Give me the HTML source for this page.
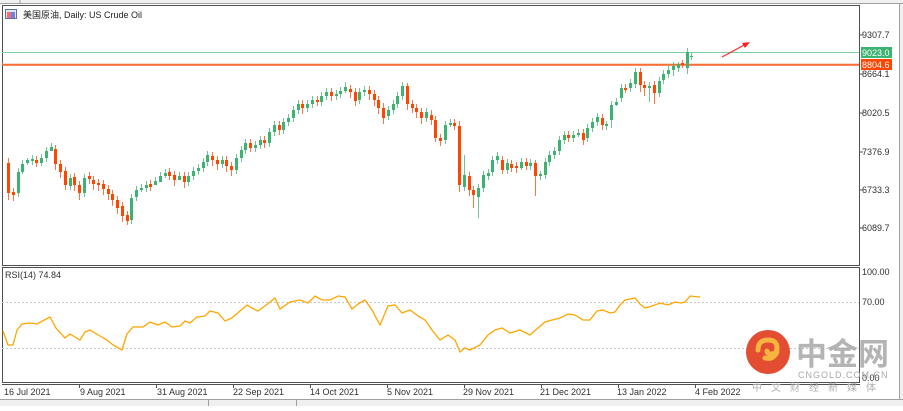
<!DOCTYPE html>
<html><head><meta charset="utf-8"><style>
body{margin:0;width:903px;height:406px;overflow:hidden;background:#fff;font-family:"Liberation Sans","Noto Sans CJK SC",sans-serif}
svg text{font-family:"Liberation Sans","Noto Sans CJK SC",sans-serif}
</style></head><body>
<svg width="903" height="406" xmlns="http://www.w3.org/2000/svg">
<rect x="0" y="0" width="903" height="406" fill="#fff"/>
<rect x="0" y="0" width="903" height="3" fill="#f0f0f0"/>
<line x1="0" y1="3.5" x2="903" y2="3.5" stroke="#a0a0a0"/>
<line x1="20" y1="0" x2="20" y2="3" stroke="#a0a0a0"/>
<rect x="0" y="399" width="903" height="7" fill="#f0f0f0"/>
<line x1="0" y1="399.5" x2="903" y2="399.5" stroke="#a0a0a0"/>
<line x1="208.5" y1="400" x2="208.5" y2="406" stroke="#a0a0a0"/>
<line x1="296.5" y1="400" x2="296.5" y2="406" stroke="#a0a0a0"/>
<rect x="899" y="4" width="4" height="395" fill="#f0f0f0"/>
<line x1="899.5" y1="4" x2="899.5" y2="399" stroke="#a0a0a0"/>
<rect x="2.5" y="5.5" width="857" height="260" fill="none" stroke="#505050"/>
<rect x="2.5" y="267.5" width="857" height="115" fill="none" stroke="#505050"/>
<line x1="2" y1="384.5" x2="860" y2="384.5" stroke="#505050"/>
<line x1="2" y1="302.5" x2="859" y2="302.5" stroke="#c8c8c8" stroke-dasharray="2,2"/>
<line x1="2" y1="348.5" x2="859" y2="348.5" stroke="#c8c8c8" stroke-dasharray="2,2"/>
<line x1="2" y1="52.5" x2="859" y2="52.5" stroke="#7fd0a0"/>
<line x1="2" y1="64" x2="859" y2="64" stroke="#f8b090"/>
<line x1="2" y1="65" x2="859" y2="65" stroke="#ff4500" stroke-width="1.3"/>

<!-- wicks -->
<path stroke-width="1" fill="none" stroke="#ff4500" opacity="0.75" d="
M8.5 158V200 M13.5 188V201 M36.5 156V167 M55.5 145V170 M60.5 160V178 M65.5 167V190 M74.5 173V191 M79.5 181V200 M89.5 172V184 M93.5 176V190 M98.5 179V191 M103.5 180V195 M108.5 185V200 M112.5 190V206 M117.5 196V214 M122.5 202V222 M127.5 211V225
M150.5 180V191 M169.5 168V180 M174.5 171V186 M184.5 172V188 M212.5 152V166 M217.5 156V170 M226.5 156V172 M231.5 162V176 M250.5 139V152 M264.5 136V148 M279.5 121V135 M302.5 100V114 M317.5 96V106 M331.5 88V101 M350.5 85V98 M355.5 88V106 M369.5 86V100 M374.5 90V106 M378.5 96V114 M383.5 103V124
M407.5 83V110 M412.5 100V113 M416.5 104V118 M421.5 108V124 M431.5 110V125 M435.5 116V142 M440.5 134V146 M454.5 119V130 M459.5 121V192 M469.5 172V196 M473.5 186V208 M502.5 156V174 M511.5 160V172 M516.5 162V173 M526.5 158V170 M535.5 160V196 M568.5 131V142 M583.5 129V145 M602.5 114V130 M625.5 84V93 M640.5 68V92 M644.5 81V96 M654.5 81V104 M682.5 60V68"/>
<path stroke-width="1" fill="none" stroke="#3cb371" opacity="0.75" d="
M18.5 168V197 M22.5 160V174 M27.5 158V165 M32.5 155V165 M41.5 154V166 M46.5 147V162 M51.5 143V151 M70.5 174V190 M84.5 174V197 M131.5 194V224 M136.5 186V201 M141.5 184V192 M146.5 181V192 M155.5 177V185 M160.5 172V180 M165.5 169V178 M179.5 172V180 M188.5 172V186 M193.5 167V180 M198.5 164V175 M203.5 158V172 M207.5 151V166 M222.5 156V168 M236.5 154V174 M241.5 146V162 M245.5 139V154 M255.5 141V152 M260.5 136V149 M269.5 128V147 M274.5 121V136 M283.5 118V134 M288.5 114V126 M293.5 106V122 M298.5 100V114 M307.5 100V112 M312.5 96V108 M321.5 92V106 M326.5 88V100 M336.5 90V100 M340.5 87V98 M345.5 82V93 M359.5 88V104 M364.5 86V96
M388.5 106V120 M393.5 100V114 M397.5 92V108 M402.5 82V100 M426.5 108V122 M445.5 121V144 M450.5 119V127 M464.5 155V191 M478.5 184V218 M483.5 171V192 M488.5 169V180 M492.5 156V176 M497.5 152V164 M507.5 159V174 M521.5 158V170 M530.5 159V170 M540.5 171V180 M545.5 158V179 M549.5 151V166 M554.5 147V159 M559.5 136V155 M564.5 131V144 M573.5 131V142 M578.5 129V137 M587.5 124V142 M592.5 118V132 M597.5 113V126 M606.5 121V130 M611.5 101V128 M616.5 98V106 M621.5 84V102 M630.5 79V92 M635.5 68V88 M649.5 82V102 M659.5 77V97 M663.5 70V84 M668.5 66V78 M673.5 62V76 M678.5 62V72 M687.5 48V74 M691.5 53V60"/>
<!-- red bodies -->
<g fill="#ff4500">
<rect x="7" y="163" width="3" height="30"/><rect x="12" y="192" width="3" height="3"/><rect x="35" y="160" width="3" height="3"/><rect x="54" y="149" width="3" height="15"/><rect x="59" y="164" width="3" height="8"/><rect x="64" y="171" width="3" height="14"/><rect x="73" y="177" width="3" height="8"/><rect x="78" y="185" width="3" height="8"/><rect x="88" y="176" width="3" height="3"/><rect x="92" y="180" width="3" height="4"/><rect x="97" y="183" width="3" height="2"/><rect x="102" y="184" width="3" height="5"/><rect x="107" y="189" width="3" height="5"/><rect x="111" y="194" width="3" height="6"/><rect x="116" y="200" width="3" height="8"/><rect x="121" y="206" width="3" height="10"/><rect x="126" y="215" width="3" height="6"/>
<rect x="149" y="184" width="3" height="3"/><rect x="168" y="172" width="3" height="4"/><rect x="173" y="175" width="3" height="5"/><rect x="183" y="176" width="3" height="6"/><rect x="211" y="156" width="3" height="4"/><rect x="216" y="160" width="3" height="4"/><rect x="225" y="160" width="3" height="6"/><rect x="230" y="166" width="3" height="4"/><rect x="249" y="143" width="3" height="5"/><rect x="263" y="140" width="3" height="3"/><rect x="278" y="125" width="3" height="5"/><rect x="301" y="104" width="3" height="4"/><rect x="316" y="100" width="3" height="2"/><rect x="330" y="92" width="3" height="4"/><rect x="349" y="89" width="3" height="3"/><rect x="354" y="92" width="3" height="9"/><rect x="368" y="90" width="3" height="4"/><rect x="373" y="94" width="3" height="6"/><rect x="377" y="100" width="3" height="8"/><rect x="382" y="108" width="3" height="10"/>
<rect x="406" y="86" width="3" height="18"/><rect x="411" y="104" width="3" height="4"/><rect x="415" y="108" width="3" height="4"/><rect x="420" y="112" width="3" height="6"/><rect x="430" y="115" width="3" height="5"/><rect x="434" y="120" width="3" height="18"/><rect x="439" y="138" width="3" height="3"/><rect x="453" y="123" width="3" height="3"/><rect x="458" y="126" width="3" height="59"/><rect x="468" y="176" width="3" height="14"/><rect x="472" y="190" width="3" height="5"/><rect x="501" y="160" width="3" height="10"/><rect x="510" y="164" width="3" height="4"/><rect x="515" y="166" width="3" height="2"/><rect x="525" y="162" width="3" height="4"/><rect x="534" y="163" width="3" height="13"/><rect x="567" y="135" width="3" height="3"/><rect x="582" y="133" width="3" height="7"/><rect x="601" y="118" width="3" height="7"/><rect x="624" y="88" width="3" height="2"/><rect x="639" y="72" width="3" height="13"/><rect x="643" y="85" width="3" height="3"/><rect x="653" y="85" width="3" height="8"/><rect x="681" y="63" width="3" height="2"/>
</g>
<!-- green bodies -->
<g fill="#3cb371">
<rect x="17" y="172" width="3" height="21"/><rect x="21" y="164" width="3" height="8"/><rect x="26" y="160" width="3" height="3"/><rect x="31" y="159" width="3" height="2"/><rect x="40" y="158" width="3" height="5"/><rect x="45" y="151" width="3" height="7"/><rect x="50" y="147" width="3" height="4"/><rect x="69" y="178" width="3" height="8"/><rect x="83" y="178" width="3" height="15"/><rect x="130" y="198" width="3" height="22"/><rect x="135" y="190" width="3" height="7"/><rect x="140" y="188" width="3" height="2"/><rect x="145" y="185" width="3" height="3"/><rect x="154" y="181" width="3" height="4"/><rect x="159" y="176" width="3" height="6"/><rect x="164" y="173" width="3" height="3"/><rect x="178" y="176" width="3" height="4"/><rect x="187" y="176" width="3" height="6"/><rect x="192" y="171" width="3" height="5"/><rect x="197" y="168" width="3" height="3"/><rect x="202" y="162" width="3" height="6"/><rect x="206" y="155" width="3" height="7"/><rect x="221" y="160" width="3" height="4"/><rect x="235" y="158" width="3" height="12"/><rect x="240" y="150" width="3" height="8"/><rect x="244" y="143" width="3" height="7"/><rect x="254" y="145" width="3" height="3"/><rect x="259" y="140" width="3" height="5"/><rect x="268" y="132" width="3" height="11"/><rect x="273" y="125" width="3" height="7"/><rect x="282" y="122" width="3" height="8"/><rect x="287" y="118" width="3" height="4"/><rect x="292" y="110" width="3" height="8"/><rect x="297" y="104" width="3" height="6"/><rect x="306" y="104" width="3" height="4"/><rect x="311" y="100" width="3" height="4"/><rect x="320" y="96" width="3" height="6"/><rect x="325" y="92" width="3" height="4"/><rect x="335" y="94" width="3" height="2"/><rect x="339" y="91" width="3" height="3"/><rect x="344" y="87" width="3" height="4"/><rect x="358" y="92" width="3" height="8"/><rect x="363" y="90" width="3" height="2"/>
<rect x="387" y="110" width="3" height="6"/><rect x="392" y="104" width="3" height="6"/><rect x="396" y="96" width="3" height="8"/><rect x="401" y="86" width="3" height="10"/><rect x="425" y="112" width="3" height="6"/><rect x="444" y="125" width="3" height="15"/><rect x="449" y="123" width="3" height="2"/><rect x="463" y="175" width="3" height="12"/><rect x="477" y="188" width="3" height="9"/><rect x="482" y="175" width="3" height="13"/><rect x="487" y="173" width="3" height="3"/><rect x="491" y="160" width="3" height="12"/><rect x="496" y="156" width="3" height="4"/><rect x="506" y="163" width="3" height="7"/><rect x="520" y="162" width="3" height="6"/><rect x="529" y="163" width="3" height="3"/><rect x="539" y="174" width="3" height="2"/><rect x="544" y="162" width="3" height="13"/><rect x="548" y="155" width="3" height="7"/><rect x="553" y="151" width="3" height="4"/><rect x="558" y="140" width="3" height="11"/><rect x="563" y="135" width="3" height="5"/><rect x="572" y="135" width="3" height="3"/><rect x="577" y="133" width="3" height="2"/><rect x="586" y="128" width="3" height="10"/><rect x="591" y="122" width="3" height="6"/><rect x="596" y="117" width="3" height="5"/><rect x="605" y="124" width="3" height="2"/><rect x="610" y="105" width="3" height="15"/><rect x="615" y="102" width="3" height="3"/><rect x="620" y="88" width="3" height="10"/><rect x="629" y="83" width="3" height="5"/><rect x="634" y="72" width="3" height="12"/><rect x="648" y="86" width="3" height="2"/><rect x="658" y="81" width="3" height="12"/><rect x="662" y="74" width="3" height="6"/><rect x="667" y="70" width="3" height="4"/><rect x="672" y="66" width="3" height="4"/><rect x="677" y="64" width="3" height="4"/><rect x="686" y="52" width="3" height="16"/><rect x="690" y="56" width="3" height="1"/>
</g>

<polyline fill="none" stroke="#ffa500" stroke-width="1.3" points="3,331 8,345 13,345 17,330 22,324 30,323 37,324 50,317 56,328 65,338 70,334 80,340 85,332 90,330 100,336 107,340 113,345 122,350 127,334 133,327 143,327 150,322 158,325 165,322 172,327 180,326 185,321 190,323 197,317 205,316 210,311 218,313 225,321 232,318 240,311 247,305 252,308 258,311 265,306 275,298 280,309 290,302 300,300 308,303 315,296 322,300 330,300 338,296 345,297 352,309 358,304 365,300 372,310 380,325 388,306 395,305 402,313 410,310 418,316 425,320 432,330 440,340 448,335 455,340 460,352 465,348 470,350 480,345 488,335 495,330 502,328 510,333 520,330 530,335 538,328 545,322 552,320 560,318 568,314 575,315 583,320 590,320 597,311 603,310 610,313 615,312 620,305 625,300 635,298 640,304 645,308 652,306 660,303 668,305 675,302 681,303 685,302 690,296 700,297"/>

<line x1="722" y1="57" x2="746" y2="44" stroke="#ff2020"/>
<polygon points="750,42 742,43 745,48" fill="#ff2020"/>
<rect x="5.5" y="9.5" width="11" height="9" fill="#dfe6f5" stroke="#6070a0"/>
<rect x="7" y="12" width="4" height="6" fill="#f07070"/><rect x="11" y="12" width="4" height="6" fill="#7080e0"/>
<text x="23" y="18" font-size="9" fill="#202020">美国原油, Daily:  US Crude Oil</text>
<text x="5" y="278" font-size="9" fill="#303030">RSI(14) 74.84</text>
<g font-size="9" fill="#303030">
<text x="862" y="38">9307.7</text>
<text x="862" y="77">8664.1</text>
<text x="862" y="116">8020.5</text>
<text x="862" y="155">7376.9</text>
<text x="862" y="193">6733.3</text>
<text x="862" y="231">6089.7</text>
<text x="862" y="275">100.00</text>
<text x="862" y="305">70.00</text>
<text x="862" y="381">0.00</text>
</g>
<g stroke="#505050"><line x1="860" y1="35" x2="863" y2="35"/><line x1="860" y1="74" x2="863" y2="74"/><line x1="860" y1="113" x2="863" y2="113"/><line x1="860" y1="152" x2="863" y2="152"/><line x1="860" y1="190" x2="863" y2="190"/><line x1="860" y1="228" x2="863" y2="228"/></g>
<rect x="861" y="47" width="31" height="11" fill="#3cb371"/>
<text x="862" y="56" font-size="9" fill="#fff">9023.0</text>
<rect x="861" y="59" width="31" height="11" fill="#ff4500"/>
<text x="862" y="68" font-size="9" fill="#fff">8804.6</text>
<g font-size="9" fill="#303030">
<text x="4" y="395">16 Jul 2021</text>
<text x="80" y="395">9 Aug 2021</text>
<text x="157" y="395">31 Aug 2021</text>
<text x="233" y="395">22 Sep 2021</text>
<text x="310" y="395">14 Oct 2021</text>
<text x="387" y="395">5 Nov 2021</text>
<text x="463" y="395">29 Nov 2021</text>
<text x="540" y="395">21 Dec 2021</text>
<text x="617" y="395">13 Jan 2022</text>
<text x="695" y="395">4 Feb 2022</text>
</g>
<g stroke="#505050"><line x1="79.5" y1="384" x2="79.5" y2="388"/><line x1="156.5" y1="384" x2="156.5" y2="388"/><line x1="233.5" y1="384" x2="233.5" y2="388"/><line x1="310.5" y1="384" x2="310.5" y2="388"/><line x1="387.5" y1="384" x2="387.5" y2="388"/><line x1="464.5" y1="384" x2="464.5" y2="388"/><line x1="541.5" y1="384" x2="541.5" y2="388"/><line x1="618.5" y1="384" x2="618.5" y2="388"/><line x1="695.5" y1="384" x2="695.5" y2="388"/></g>
<circle cx="768" cy="352" r="22" fill="#e03a1c" opacity="0.9"/>
<path d="M758 350 q0-10 10-10 q9 0 9 8 q0 6-6 6 q-4 0-4-3 M765 358 q8 2 12-6" stroke="#f8c040" stroke-width="5" fill="none" stroke-linecap="round" opacity="0.9"/>
<text x="796" y="365" font-size="31" font-weight="bold" fill="#a8a8a8" opacity="0.85" font-family="Noto Sans CJK SC,sans-serif">中金网</text>
<text x="798" y="378" font-size="9" fill="#a8a8a8" letter-spacing="1">CNGOLD.COM.CN</text>
<text x="752" y="391" font-size="10" fill="#b0b0b0" letter-spacing="9">中文财经新媒体</text>
</svg>
</body></html>
